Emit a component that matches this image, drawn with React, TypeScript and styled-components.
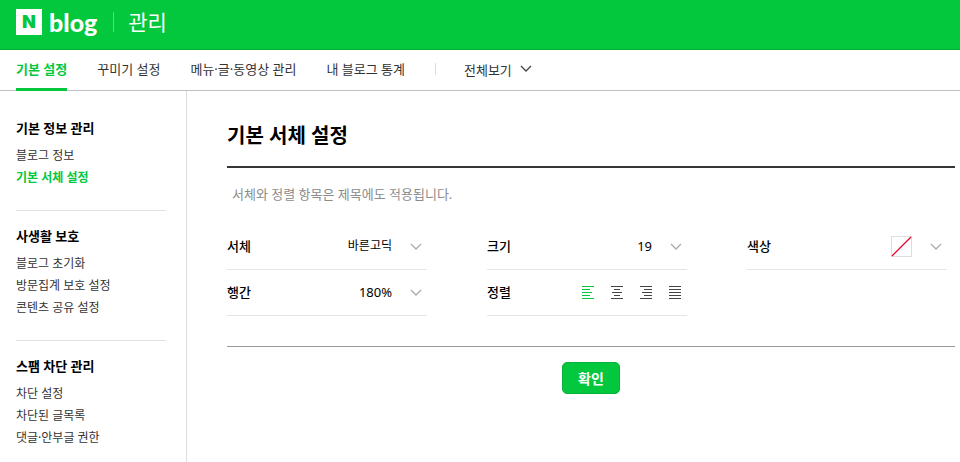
import React, { useState } from "react";
import styled, { createGlobalStyle } from "styled-components";

const GREEN = "#03c73c";

const GlobalStyle = createGlobalStyle`
  *, *::before, *::after { box-sizing: border-box; }
  body {
    margin: 0;
    background: #fff;
    color: #000;
    font-family: "Noto Sans", "Noto Sans CJK KR", sans-serif;
    font-size: 13px;
  }
  button, select { font: inherit; color: inherit; }
`;

const Page = styled.div`
  min-height: 100vh;
  display: flex;
  flex-direction: column;
`;

const Header = styled.header`
  display: flex;
  align-items: center;
  height: 50px;
  padding: 0 16px 6px;
  background: ${GREEN};
  border-bottom: 1px solid #03ae34;
  color: #fff;
`;

const Brand = styled.a`
  display: flex;
  align-items: center;
  gap: 7px;
  color: #fff;
  text-decoration: none;
`;

const BrandMark = styled.span`
  width: 26px;
  height: 26px;
  background: #fff;
  color: ${GREEN};
  font: 900 18px/26px Inter, sans-serif;
  text-align: center;
`;

const BrandName = styled.span`
  font: 900 25px/26px Lato, sans-serif;
`;

const Service = styled.a`
  display: flex;
  align-items: center;
  margin-left: 16px;
  color: #fff;
  font-size: 21px;
  line-height: 26px;
  text-decoration: none;

  &::before {
    content: "";
    width: 1px;
    height: 20px;
    margin-right: 14px;
    background: #5bdb80;
  }
`;

const Nav = styled.nav`
  display: flex;
  gap: 30px;
  height: 41px;
  padding: 0 16px;
  border-bottom: 1px solid #bfbfbf;
`;

const Tab = styled.a<{ $active?: boolean }>`
  height: 41px;
  line-height: 39px;
  border-bottom: 3px solid ${(p) => (p.$active ? GREEN : "transparent")};
  color: ${(p) => (p.$active ? GREEN : "#333")};
  font-weight: ${(p) => (p.$active ? 700 : 400)};
  text-decoration: none;
  white-space: nowrap;
`;

const ViewAll = styled.button`
  display: flex;
  align-items: center;
  gap: 8px;
  height: 38px;
  padding: 0;
  border: 0;
  background: none;
  color: #333;
  white-space: nowrap;

  &::before {
    content: "";
    width: 1px;
    height: 12px;
    margin-right: 20px;
    background: #ddd;
  }
`;

const Body = styled.div`
  display: flex;
  flex: 1;
`;

const Sidebar = styled.aside`
  flex: none;
  width: 187px;
  padding: 12px 20px 0 16px;
  border-right: 1px solid #ddd;
`;

const MenuGroup = styled.section`
  padding: 15px 0 21px;

  & + & { border-top: 1px solid #e1e1e1; }
  &:last-child { padding-bottom: 0; }
`;

const MenuTitle = styled.h2`
  margin: 0 0 7px;
  font-size: 13px;
  line-height: 20px;
  font-weight: 700;
`;

const MenuList = styled.ul`
  margin: 0;
  padding: 0;
  list-style: none;
`;

const MenuLink = styled.a<{ $active?: boolean }>`
  display: block;
  font-size: 12px;
  line-height: 22px;
  color: ${(p) => (p.$active ? GREEN : "#333")};
  font-weight: ${(p) => (p.$active ? 700 : 400)};
  text-decoration: none;
`;

const Main = styled.main`
  flex: 1;
  min-width: 0;
  padding: 28px 5px 0 40px;
`;

const Title = styled.h1`
  margin: 0;
  padding-bottom: 13px;
  border-bottom: 2px solid #383536;
  font-size: 20px;
  line-height: 34px;
  font-weight: 700;
`;

const Note = styled.p`
  margin: 0;
  padding: 16px 5px 20px;
  color: #8c8c8c;
  line-height: 20px;
`;

const Settings = styled.div`
  display: grid;
  grid-template-columns: repeat(3, minmax(0, 200px));
  column-gap: 60px;
  padding-bottom: 30px;
  border-bottom: 1px solid #999;
`;

const Field = styled.div`
  display: flex;
  align-items: center;
  height: 46px;
  padding-right: 5px;
  border-bottom: 1px solid #e5e5e5;
`;

const FieldLabel = styled.label`
  flex: 1;
  padding-bottom: 2px;
  font-weight: 500;
  white-space: nowrap;
`;

const Picker = styled.div`
  display: grid;
  align-items: center;
  justify-items: end;

  & > * { grid-area: 1 / 1; }
  & > svg { pointer-events: none; }
`;

const Select = styled.select<{ $small?: boolean }>`
  appearance: none;
  padding: 0 30px 2px 0;
  border: 0;
  background: none;
  font-size: ${(p) => (p.$small ? 12 : 13)}px;
  line-height: 20px;
  text-align-last: right;
`;

const ColorButton = styled.button`
  display: flex;
  align-items: center;
  gap: 18px;
  padding: 0;
  border: 0;
  background: none;
`;

const AlignGroup = styled.div`
  display: flex;
  gap: 17px;
  padding-right: 1px;
`;

const AlignButton = styled.button<{ $active: boolean }>`
  display: flex;
  padding: 0;
  border: 0;
  background: none;
  color: ${(p) => (p.$active ? GREEN : "#444")};
`;

const Actions = styled.div`
  display: flex;
  justify-content: center;
  padding: 15px 0;
`;

const Confirm = styled.button`
  width: 58px;
  height: 32px;
  padding: 0;
  border: 1px solid #06b439;
  border-radius: 5px;
  background: ${GREEN};
  color: #fff;
  font-size: 14px;
  font-weight: 700;
`;

function Chevron({ color = "#aaa" }: { color?: string }) {
  return (
    <svg width="12" height="8" viewBox="0 0 12 8" fill="none" stroke={color} strokeWidth="1.3" aria-hidden="true">
      <path d="M1 1L6 6L11 1" />
    </svg>
  );
}

function Swatch() {
  return (
    <svg width="21" height="21" viewBox="0 0 21 21" fill="none" aria-hidden="true">
      <rect x="0.5" y="0.5" width="20" height="20" fill="#fff" stroke="#ddd" />
      <line x1="1" y1="20" x2="20" y2="1" stroke="#e6002d" strokeWidth="1.2" />
    </svg>
  );
}

type Align = "left" | "center" | "right" | "justify";

const ALIGNMENTS: { id: Align; label: string; lines: [number, number][] }[] = [
  { id: "left", label: "왼쪽 정렬", lines: [[0, 12], [0, 8], [0, 10], [0, 8], [0, 12]] },
  { id: "center", label: "가운데 정렬", lines: [[0, 12], [3, 6], [1, 10], [3, 6], [0, 12]] },
  { id: "right", label: "오른쪽 정렬", lines: [[0, 12], [4, 8], [2, 10], [4, 8], [0, 12]] },
  { id: "justify", label: "양쪽 정렬", lines: [[0, 12], [0, 12], [0, 12], [0, 12], [0, 12]] },
];

const TABS = ["기본 설정", "꾸미기 설정", "메뉴·글·동영상 관리", "내 블로그 통계"];

const MENU = [
  { title: "기본 정보 관리", items: ["블로그 정보", "기본 서체 설정"] },
  { title: "사생활 보호", items: ["블로그 초기화", "방문집계 보호 설정", "콘텐츠 공유 설정"] },
  { title: "스팸 차단 관리", items: ["차단 설정", "차단된 글목록", "댓글·안부글 권한"] },
];

export default function App() {
  const [align, setAlign] = useState<Align>("left");
  return (
    <Page>
      <GlobalStyle />
      <Header>
        <Brand href="#">
          <BrandMark>N</BrandMark>
          <BrandName>blog</BrandName>
        </Brand>
        <Service href="#">관리</Service>
      </Header>
      <Nav>
        {TABS.map((tab, i) => (
          <Tab key={tab} href="#" $active={i === 0}>{tab}</Tab>
        ))}
        <ViewAll type="button">
          전체보기
          <Chevron color="#444" />
        </ViewAll>
      </Nav>
      <Body>
        <Sidebar>
          {MENU.map((group) => (
            <MenuGroup key={group.title}>
              <MenuTitle>{group.title}</MenuTitle>
              <MenuList>
                {group.items.map((item) => (
                  <li key={item}>
                    <MenuLink href="#" $active={item === "기본 서체 설정"}>{item}</MenuLink>
                  </li>
                ))}
              </MenuList>
            </MenuGroup>
          ))}
        </Sidebar>
        <Main>
          <Title>기본 서체 설정</Title>
          <Note>서체와 정렬 항목은 제목에도 적용됩니다.</Note>
          <Settings>
            <Field>
              <FieldLabel htmlFor="font">서체</FieldLabel>
              <Picker>
                <Select id="font" $small><option>바른고딕</option></Select>
                <Chevron />
              </Picker>
            </Field>
            <Field>
              <FieldLabel htmlFor="size">크기</FieldLabel>
              <Picker>
                <Select id="size"><option>19</option></Select>
                <Chevron />
              </Picker>
            </Field>
            <Field>
              <FieldLabel htmlFor="color">색상</FieldLabel>
              <ColorButton id="color" type="button">
                <Swatch />
                <Chevron />
              </ColorButton>
            </Field>
            <Field>
              <FieldLabel htmlFor="leading">행간</FieldLabel>
              <Picker>
                <Select id="leading"><option>180%</option></Select>
                <Chevron />
              </Picker>
            </Field>
            <Field>
              <FieldLabel as="span" id="align-label">정렬</FieldLabel>
              <AlignGroup role="group" aria-labelledby="align-label">
                {ALIGNMENTS.map(({ id, label, lines }) => (
                  <AlignButton
                    key={id}
                    type="button"
                    aria-label={label}
                    aria-pressed={align === id}
                    $active={align === id}
                    onClick={() => setAlign(id)}
                  >
                    <svg width="12" height="13" viewBox="0 0 12 13" fill="currentColor" aria-hidden="true">
                      {lines.map(([x, width], i) => (
                        <rect key={i} x={x} y={i * 3} width={width} height="1" />
                      ))}
                    </svg>
                  </AlignButton>
                ))}
              </AlignGroup>
            </Field>
          </Settings>
          <Actions>
            <Confirm type="button">확인</Confirm>
          </Actions>
        </Main>
      </Body>
    </Page>
  );
}
